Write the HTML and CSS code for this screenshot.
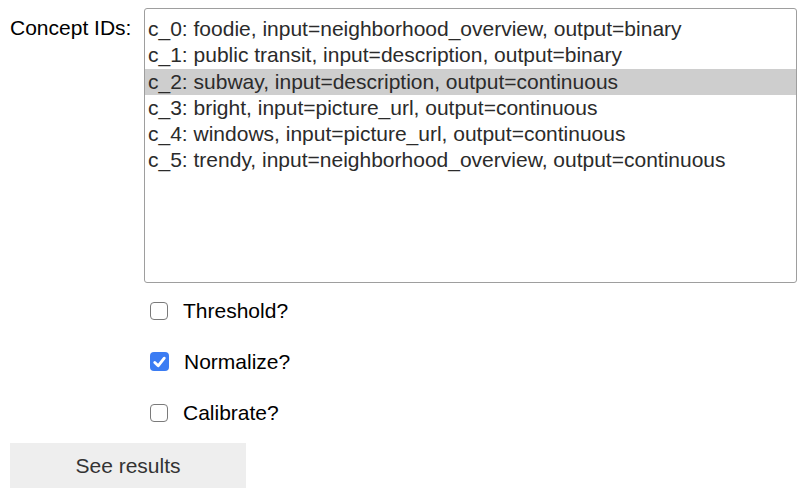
FILE: index.html
```html
<!DOCTYPE html>
<html>
<head>
<meta charset="utf-8">
<link rel="stylesheet" href="styles.css">
</head>
<body>
<div class="page">
  <div class="field">
    <label class="label">Concept IDs:</label>
    <div class="select">
      <div class="opt">c_0: foodie, input=neighborhood_overview, output=binary</div>
      <div class="opt">c_1: public transit, input=description, output=binary</div>
      <div class="opt sel">c_2: subway, input=description, output=continuous</div>
      <div class="opt">c_3: bright, input=picture_url, output=continuous</div>
      <div class="opt">c_4: windows, input=picture_url, output=continuous</div>
      <div class="opt">c_5: trendy, input=neighborhood_overview, output=continuous</div>
    </div>
  </div>
  <div class="checks">
    <div class="check"><span class="box"></span><span class="ctext">Threshold?</span></div>
    <div class="check"><span class="box on"><svg viewBox="0 0 20 20" width="20" height="20"><path d="M5 10.5 L8.6 14 L15 6" fill="none" stroke="#fff" stroke-width="3" stroke-linecap="round" stroke-linejoin="round"/></svg></span><span class="ctext">Normalize?</span></div>
    <div class="check"><span class="box"></span><span class="ctext">Calibrate?</span></div>
  </div>
  <button class="btn">See results</button>
</div>
</body>
</html>
```
FILE: styles.css
```css
html, body {
  margin: 0;
  padding: 0;
  background: #fff;
}
body {
  font-family: "Liberation Sans", Arial, Helvetica, sans-serif;
  font-size: 21px;
}
.page {
  padding: 8px 10px 0 10px;
  display: flex;
  flex-direction: column;
}
.field {
  display: flex;
  align-items: flex-start;
  gap: 13px;
}
.label {
  width: 121px;
  text-align: right;
  color: #000;
  line-height: 26px;
  padding-top: 7px;
  white-space: nowrap;
}
.select {
  width: 651px;
  border: 1px solid #9e9e9e;
  border-radius: 3px;
  padding-top: 7px;
  box-sizing: content-box;
  height: 266px;
}
.opt {
  height: 26.3px;
  line-height: 26.3px;
  padding-left: 3px;
  color: #2b2b2b;
  white-space: nowrap;
}
.opt.sel {
  background: #cecece;
}
.checks {
  margin-left: 140px;
  margin-top: 17px;
  display: flex;
  flex-direction: column;
  gap: 30px;
}
.check {
  display: flex;
  align-items: center;
  height: 21px;
}
.box {
  width: 16px;
  height: 16px;
  border: 1.5px solid #7a7a7a;
  border-radius: 4px;
  box-sizing: content-box;
  margin-right: 15px;
  display: flex;
  align-items: center;
  justify-content: center;
}
.box.on {
  width: 19px;
  height: 19px;
  border: none;
  background: #3b7cf3;
}
.ctext {
  color: #000;
}
.btn {
  margin-top: 20px;
  width: 236px;
  height: 45px;
  border: none;
  background: #eeeeee;
  font-family: inherit;
  font-size: 21px;
  color: #333;
  padding: 0;
}
```
